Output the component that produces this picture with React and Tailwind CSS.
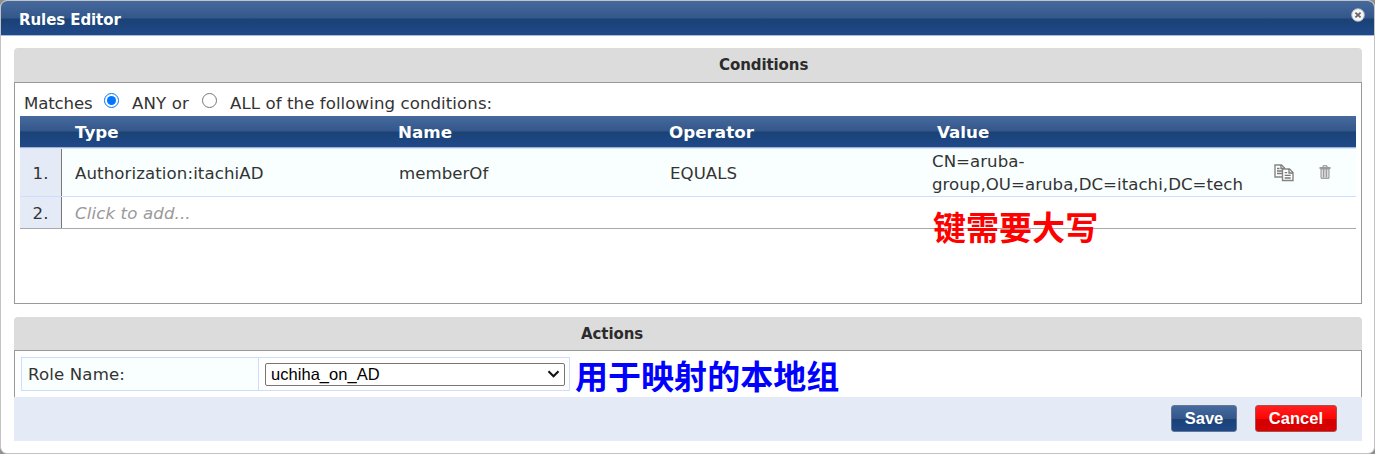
import React from "react";

const verdana = "font-['DejaVu_Sans',Verdana,sans-serif]";

function CopyIcon() {
  return (
    <svg className="block" width="20" height="18" viewBox="0 0 20 18" fill="none">
      <path d="M1 1h6.5l3 3v9H1z" fill="#fff" stroke="#858585" strokeWidth="1.4" />
      <path d="M7 1v3.5h3.5M3 4.5h2.5M3 7h5M3 9.5h5" stroke="#777" strokeWidth="1.3" />
      <path d="M8.5 5h7l3.5 3.5V16.5H8.5z" fill="#fff" stroke="#858585" strokeWidth="1.4" />
      <path d="M15 5v4h4M10.7 8.7h2.5M10.7 11.4h6M10.7 14h6" stroke="#777" strokeWidth="1.3" />
    </svg>
  );
}

function TrashIcon() {
  return (
    <svg className="block" width="12" height="14" viewBox="0 0 12 14" fill="none">
      <path d="M2 4h8v9.3H2z" fill="#dcdcdc" stroke="#929292" />
      <path d="M4.7 4.5v8M7.3 4.5v8" stroke="#858585" strokeWidth="0.9" />
      <path d="M0.5 2h11v2h-11z" fill="#9a9a9a" />
      <path d="M4 2V.8h4V2" stroke="#888" />
    </svg>
  );
}

function CloseIcon() {
  return (
    <svg className="block" width="14" height="14" viewBox="0 0 14 14">
      <circle cx="7" cy="7" r="6.3" fill="#f6f6f6" stroke="#b4bccb" strokeWidth="0.9" />
      <path d="M4.4 4.6l5.2 4.8M9.6 4.6L4.4 9.4" stroke="#666" strokeWidth="1.9" />
    </svg>
  );
}

function SectionTitle({ children, className }) {
  return (
    <div className={`flex items-center rounded-t-[4px] bg-[#dcdcdc] text-[15px] font-bold tracking-[-0.08px] text-[#2b2b2b] ${className}`}>
      {children}
    </div>
  );
}

export default function App() {
  return (
    <div className={`h-[454px] w-[1375px] overflow-hidden bg-[#909090] text-[16.6px] leading-[20px] tracking-[0.04px] whitespace-nowrap text-[#333] ${verdana}`}>
      <div className="flex h-[454px] flex-col overflow-hidden rounded-[7px] border border-[#c3c3c3] bg-white">
        <header className="flex h-[35px] shrink-0 items-center justify-between border-b border-[#a9bddb] bg-[linear-gradient(#466a9e_0,#33578a_17px,#1a4275_18px,#20498a_100%)] pr-[9px] pl-[18px]">
          <h1 className="pt-[3px] text-[15px] font-bold tracking-[-0.08px] text-white">Rules Editor</h1>
          <button aria-label="Close" className="-mt-[6px]"><CloseIcon /></button>
        </header>

        <main className="flex flex-col pt-[12px] pr-[12px] pl-[13px]">
          <section>
            <SectionTitle className="h-[34px] pl-[705px]">Conditions</SectionTitle>
            <div className="h-[222px] border border-[#999] px-[5px] pt-[10px]">
              <div className="flex h-[23px] items-start pl-[4px]">
                <span className="w-[80px] pt-px tracking-[-0.15px]">Matches</span>
                <input type="radio" name="match" defaultChecked className="h-[15px] w-[15px] shrink-0" />
                <span className="ml-[13px] w-[70px] pt-px tracking-[0.15px]">ANY or</span>
                <input type="radio" name="match" className="h-[15px] w-[15px] shrink-0" />
                <span className="ml-[13px] pt-px tracking-[0.08px]">ALL of the following conditions:</span>
              </div>
              <div className="grid h-[31px] grid-cols-[55px_323px_271px_268px_1fr] items-center bg-[linear-gradient(#466a9e_0,#33578a_15px,#1a4275_16px,#20498a_100%)] text-[16.7px] font-bold text-white">
                <span />
                <span>Type</span>
                <span>Name</span>
                <span>Operator</span>
                <span>Value</span>
              </div>
              <div className="h-[2px] border-t border-[#a3b1cc] bg-[#dce6fa]" />
              <div className="flex h-[48px] items-center border-b border-[#ccddff] bg-[#f8fffe]">
                <div className="flex h-full w-[42px] items-center justify-center border-r border-[#777] bg-[#e4eaf6] pt-[2px]">1.</div>
                <span className="w-[324px] pt-[2px] pl-[13px] tracking-[0.1px]">Authorization:itachiAD</span>
                <span className="w-[271px] pt-[2px] pl-[13px]">memberOf</span>
                <span className="w-[275px] pt-[2px] pl-[13px]">EQUALS</span>
                <span className="w-[342px] leading-[23px]">CN=aruba-<br />group,OU=aruba,DC=itachi,DC=tech</span>
                <button aria-label="Copy"><CopyIcon /></button>
                <button aria-label="Delete" className="-mt-[2px] ml-[25px]"><TrashIcon /></button>
              </div>
              <div className="relative flex h-[32px] items-center border-b border-[#aaa]">
                <div className="flex h-full w-[42px] items-center justify-center border-r border-[#777] bg-[#e4eaf6] pt-[2px]">2.</div>
                <span className="pt-[2px] pl-[13px] tracking-[0.13px] text-[#999] italic">Click to add...</span>
                <span className="absolute top-[7px] left-[913px] font-['Noto_Sans_CJK_SC',sans-serif] text-[33px] leading-[44px] font-bold text-[#ff0000]">键需要大写</span>
              </div>
            </div>
          </section>

          <section className="mt-[13px]">
            <SectionTitle className="h-[33px] pl-[567px]">Actions</SectionTitle>
            <div className="flex h-[47px] items-start border-x border-t border-[#999] pt-[6px] pl-[6px]">
              <div className="flex h-[34px] w-[549px] border border-[#ccddff]">
                <label className="flex w-[236px] items-center bg-[#f8fffe] pt-px pl-[6px] tracking-[0.15px]">Role Name:</label>
                <div className="flex flex-1 items-center border-l border-[#ccddff] pl-[6px]">
                  <div className="flex h-[23px] w-[300px] items-center justify-between rounded-[2px] border border-[#767676] bg-white pr-[4px] pl-[5px] font-['Liberation_Sans',Arial,sans-serif] text-[16.5px] text-black">
                    <span className="pb-px">uchiha_on_AD</span>
                    <svg width="13" height="8" viewBox="0 0 13 8" fill="none"><path d="M1.5 1.2l5 5 5-5" stroke="#111" strokeWidth="2.1" /></svg>
                  </div>
                </div>
              </div>
              <span className="-mt-[4px] ml-[5px] font-['Noto_Sans_CJK_SC',sans-serif] text-[33px] leading-[44px] font-bold text-[#0000ff]">用于映射的本地组</span>
            </div>
            <footer className="flex h-[44px] items-start justify-end bg-[#e4eaf6] pt-[8px] pr-[25px] font-['Liberation_Sans',Arial,sans-serif] text-[16.5px] font-bold text-white">
              <button className="mr-[18px] h-[27px] w-[66px] rounded-[3px] border border-[#667691] bg-[linear-gradient(#466a9e_0,#33578a_50%,#1a4275_52%,#20498a_100%)] pb-[2px]">Save</button>
              <button className="h-[27px] w-[82px] rounded-[3px] border border-[#a65052] bg-[linear-gradient(#ff2020_0,#ff0505_50%,#d00000_52%,#dc0000_100%)] pb-[2px]">Cancel</button>
            </footer>
          </section>
        </main>
      </div>
    </div>
  );
}
